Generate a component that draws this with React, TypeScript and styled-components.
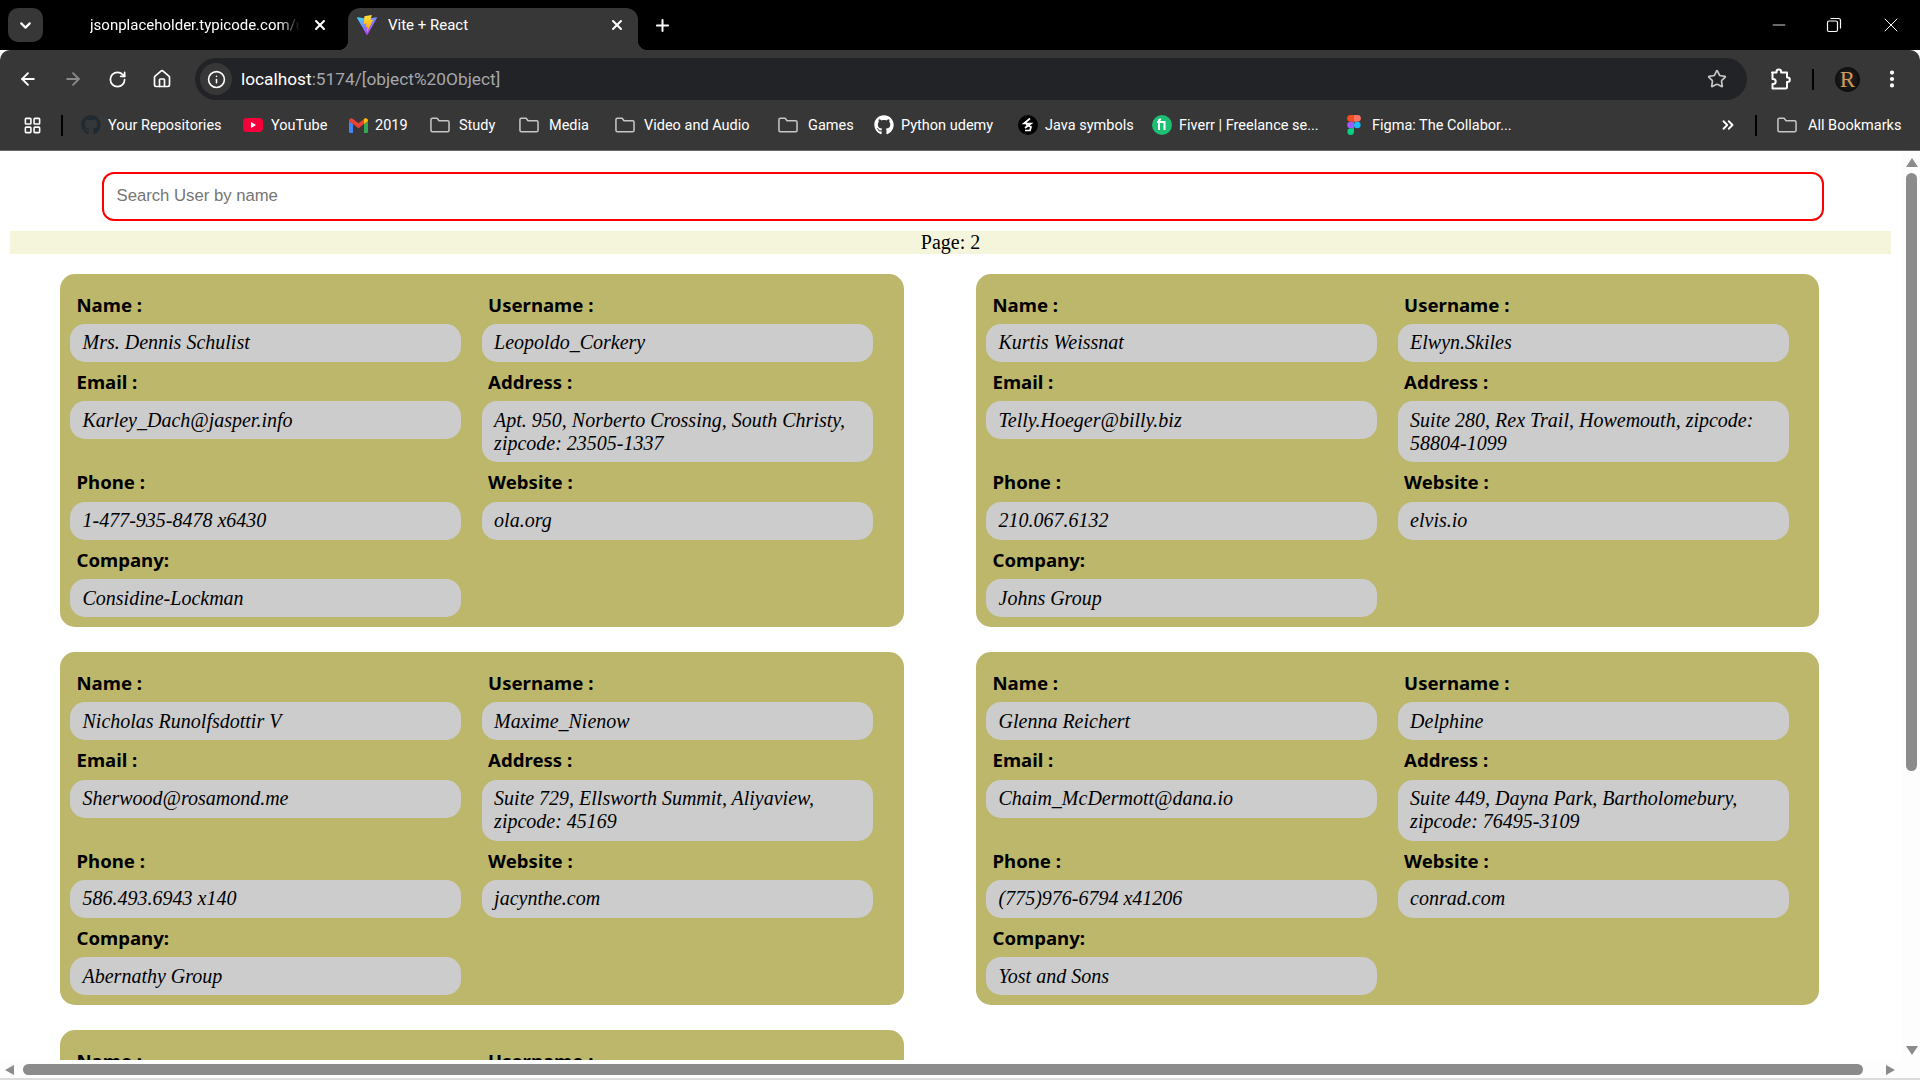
import React from "react";
import styled, { createGlobalStyle } from "styled-components";
import {
  ArrowLeft,
  ArrowRight,
  ChevronDown,
  ChevronsRight,
  Home,
  Info,
  LayoutGrid,
  Minus,
  MoreVertical,
  Plus,
  RotateCw,
  Star,
  X,
} from "lucide-react";
import { FaGithub } from "react-icons/fa";

const GlobalStyle = createGlobalStyle`
  html, body {
    margin: 0;
    padding: 0;
    overflow: hidden;
    background: #fff;
  }
`;

const uiFont = `Roboto, "Noto Sans", sans-serif`;

const Screen = styled.div`
  width: 1920px;
  height: 1080px;
  display: flex;
  flex-direction: column;
  overflow: hidden;
`;

/* browser chrome */
const TabStrip = styled.div`
  height: 50px;
  background: #000;
  display: flex;
  align-items: flex-end;
  padding-left: 8px;
  color: #fff;
  font: 15px ${uiFont};
`;

const TabListButton = styled.div`
  width: 35px;
  height: 34px;
  margin-bottom: 8px;
  border-radius: 10px;
  background: #373737;
  display: flex;
  align-items: center;
  justify-content: center;
`;

const Tab = styled.div<{ $active?: boolean }>`
  position: relative;
  height: 42px;
  display: flex;
  align-items: center;
  box-sizing: border-box;
  width: ${(p) => (p.$active ? "290px" : "305px")};
  padding: ${(p) => (p.$active ? "0 0 8px 9px" : "0 0 8px 47px")};
  border-radius: 12px 12px 0 0;
  background: ${(p) => (p.$active ? "#373737" : "transparent")};
  ${(p) =>
    p.$active &&
    `
    &:before, &:after {
      content: "";
      position: absolute;
      bottom: 0;
      width: 10px;
      height: 10px;
    }
    &:before { left: -10px; background: radial-gradient(circle at 0 0, #000 10px, #373737 10.5px); }
    &:after { right: -10px; background: radial-gradient(circle at 100% 0, #000 10px, #373737 10.5px); }
  `}
`;

const TabTitle = styled.span<{ $width: number; $indent: number; $fade?: boolean }>`
  width: ${(p) => p.$width}px;
  overflow: hidden;
  white-space: nowrap;
  margin-left: ${(p) => p.$indent}px;
  ${(p) => p.$fade && "mask-image: linear-gradient(to right, #000 90%, transparent 100%);"}
`;

const TabClose = styled.span<{ $right: number }>`
  display: flex;
  margin-left: auto;
  margin-right: ${(p) => p.$right}px;
`;

const NewTab = styled.span`
  display: flex;
  margin: 0 0 9px 15px;
  height: 32px;
  align-items: center;
`;

const WindowControls = styled.div`
  margin-left: auto;
  height: 50px;
  display: flex;
  align-items: center;
  gap: 35px;
  padding-right: 17px;
`;

const Toolbar = styled.div`
  height: 50px;
  background: #373737;
  border-radius: 10px 10px 0 0;
  display: flex;
  align-items: flex-end;
  padding-left: 18px;
  color: #fff;
`;

const NavIcons = styled.div`
  height: 42px;
  display: flex;
  align-items: center;
  gap: 25px;
`;

const Omnibox = styled.div`
  width: 1552px;
  height: 42px;
  margin-left: 23px;
  border-radius: 21px;
  background: #222326;
  display: flex;
  align-items: center;
  padding: 0 20px 0 5px;
  box-sizing: border-box;
  font: 17.3px ${uiFont};
`;

const InfoChip = styled.div`
  width: 32px;
  height: 32px;
  border-radius: 50%;
  background: #373737;
  display: flex;
  align-items: center;
  justify-content: center;
`;

const UrlHost = styled.span`
  margin-left: 9px;
  color: #fff;
`;

const UrlRest = styled.span`
  color: #a5a7ab;
`;

const StarSlot = styled.div`
  margin-left: auto;
  display: flex;
`;

const ToolbarEnd = styled.div`
  height: 42px;
  display: flex;
  align-items: center;
  margin-left: 22px;
`;

const Divider = styled.div<{ $left: number; $right: number }>`
  width: 2px;
  height: 21px;
  background: #000;
  margin: 0 ${(p) => p.$right}px 0 ${(p) => p.$left}px;
`;

const Avatar = styled.div`
  width: 25px;
  height: 25px;
  border-radius: 50%;
  background: radial-gradient(circle, #2a2a2a 0%, #0a0a0a 80%);
  color: #d39a5a;
  font: 23px/25px "Liberation Serif", serif;
  text-align: center;
`;

const MenuDots = styled.div`
  display: flex;
  margin-left: 21px;
`;

const BookmarksBar = styled.div`
  height: 51px;
  box-sizing: border-box;
  border-bottom: 1px solid #686868;
  background: #373737;
  display: flex;
  align-items: center;
  padding: 0 0 0 23px;
  color: #fff;
  font: 14.5px ${uiFont};
`;

const Bookmark = styled.div<{ $gap: number; $width: number; $left: number }>`
  display: flex;
  align-items: center;
  margin-left: ${(p) => p.$left}px;
  white-space: nowrap;
  span {
    width: ${(p) => p.$width}px;
    margin-left: ${(p) => p.$gap}px;
  }
`;

const BookmarkGlyph = styled.div`
  width: 20px;
  height: 20px;
  display: flex;
  align-items: center;
  justify-content: center;
`;

const OverflowChevrons = styled.div`
  display: flex;
  margin-left: 204px;
`;

/* page */
const Viewport = styled.div`
  flex: 1;
  display: flex;
  min-height: 0;
`;

const Content = styled.main`
  width: 1901px;
  overflow: hidden;
  padding-top: 21px;
  box-sizing: border-box;
`;

const SearchInput = styled.input`
  display: block;
  width: 1722px;
  height: 49px;
  margin-left: 102px;
  box-sizing: border-box;
  border: 2px solid #f00;
  border-radius: 12px;
  outline: none;
  padding: 0 12.5px 2px;
  font: 16.7px "Liberation Sans", Arial, sans-serif;
  &::placeholder {
    color: #757575;
  }
`;

const PageBar = styled.div`
  width: 1881px;
  height: 23px;
  margin: 10px 0 0 10px;
  background: #f5f5dc;
  color: #000;
  text-align: center;
  font: 20px/23px "Liberation Serif", serif;
`;

const CardGrid = styled.div`
  display: grid;
  grid-template-columns: 844px 843px;
  column-gap: 72px;
  row-gap: 25px;
  margin: 20px 0 0 60px;
`;

const Card = styled.section`
  background: #bdb76b;
  border-radius: 15px;
  padding: 10.6px 31px 10px 10px;
  display: grid;
  grid-template-columns: 391px 391px;
  column-gap: 20.6px;
  align-items: start;
`;

const Label = styled.div`
  height: 39.4px;
  box-sizing: border-box;
  padding: 8px 0 0 6.5px;
  font: 700 18.6px/24px "Noto Sans", "Open Sans", sans-serif;
  color: #000;
`;

const Value = styled.div`
  background: #ccc;
  border-radius: 15px;
  padding: 7.5px 12.5px;
  font: italic 20px/23px "Liberation Serif", serif;
  color: #000;
`;

/* scrollbars */
const VScroll = styled.div`
  width: 19px;
  background: #fdfdfd;
  display: flex;
  flex-direction: column;
  align-items: center;
  padding-left: 2px;
  box-sizing: border-box;
`;

const ArrowUp = styled.div`
  width: 0;
  height: 0;
  margin-top: 7px;
  border-left: 6.5px solid transparent;
  border-right: 6.5px solid transparent;
  border-bottom: 9px solid #8b8b8b;
`;

const VThumb = styled.div`
  width: 11px;
  height: 598px;
  margin-top: 6px;
  border-radius: 6px;
  background: #8b8b8b;
`;

const ArrowDown = styled.div`
  width: 0;
  height: 0;
  margin-top: auto;
  margin-bottom: 5px;
  border-left: 6.5px solid transparent;
  border-right: 6.5px solid transparent;
  border-top: 9px solid #8b8b8b;
`;

const HScroll = styled.div`
  height: 20px;
  box-sizing: border-box;
  background: #fdfdfd;
  border-bottom: 2px solid #dcdcdc;
  display: flex;
  align-items: flex-start;
  padding: 4px 0 0 5px;
`;

const ArrowLeftHead = styled.div`
  width: 0;
  height: 0;
  margin-top: 1px;
  border-top: 5.5px solid transparent;
  border-bottom: 5.5px solid transparent;
  border-right: 9px solid #8b8b8b;
`;

const HThumb = styled.div`
  width: 1840px;
  height: 11px;
  margin-left: 9px;
  border-radius: 6px;
  background: #8b8b8b;
`;

const ArrowRightHead = styled.div`
  width: 0;
  height: 0;
  margin: 1px 0 0 23px;
  border-top: 5.5px solid transparent;
  border-bottom: 5.5px solid transparent;
  border-left: 9px solid #8b8b8b;
`;

/* logos */
const ViteLogo = () => (
  <svg width="20" height="22" viewBox="0 0 256 257">
    <defs>
      <linearGradient id="viteA" x1="0%" x2="60%" y1="10%" y2="100%">
        <stop offset="0%" stopColor="#41D1FF" />
        <stop offset="100%" stopColor="#BD34FE" />
      </linearGradient>
      <linearGradient id="viteB" x1="40%" x2="50%" y1="0%" y2="90%">
        <stop offset="0%" stopColor="#FFEA83" />
        <stop offset="8%" stopColor="#FFDD35" />
        <stop offset="100%" stopColor="#FFA800" />
      </linearGradient>
    </defs>
    <path
      fill="url(#viteA)"
      d="M255.153 37.938 134.897 252.976c-2.483 4.44-8.862 4.466-11.382.048L.875 37.958c-2.746-4.814 1.371-10.646 6.827-9.67l120.385 21.517a6.537 6.537 0 0 0 2.322-.004l117.867-21.483c5.438-.991 9.574 4.796 6.877 9.62Z"
    />
    <path
      fill="url(#viteB)"
      d="M185.432.063 96.44 17.501a3.268 3.268 0 0 0-2.634 3.014l-5.474 92.456a3.268 3.268 0 0 0 3.997 3.378l24.777-5.718c2.318-.535 4.413 1.507 3.936 3.838l-7.361 36.047c-.495 2.426 1.782 4.5 4.151 3.78l15.304-4.649c2.372-.72 4.652 1.36 4.15 3.788l-11.698 56.621c-.732 3.542 3.979 5.473 5.943 2.437l1.313-2.028 72.516-144.72c1.215-2.423-.88-5.186-3.54-4.672l-25.505 4.922c-2.396.462-4.435-1.77-3.759-4.114l16.646-57.705c.677-2.35-1.37-4.583-3.769-4.113Z"
    />
  </svg>
);

const ExtensionIcon = () => (
  <svg width="22" height="22" viewBox="0 0 22 22" fill="none" stroke="#fff" strokeWidth="2" strokeLinejoin="round">
    <path d="M3 4.500h4.500V3.800a2.300 2.300 0 0 1 4.600 0v.7H18v5h.5a2.300 2.300 0 0 1 0 4.600H18V19a1.500 1.500 0 0 1-1.500 1.500H3.500v-4.500h.7a2.500 2.500 0 0 0 0-5h-.7V4.500z" />
  </svg>
);

const FolderIcon = () => (
  <svg width="21" height="16" viewBox="0 0 21 16" fill="none" stroke="#c7c7c7" strokeWidth="1.6" strokeLinejoin="round">
    <path d="M1 2.500A1.500 1.500 0 0 1 2.500 1h5l2 2.500h9A1.500 1.500 0 0 1 20 5v8.500a1.500 1.500 0 0 1-1.500 1.500h-16A1.500 1.500 0 0 1 1 13.500z" />
  </svg>
);

const YoutubeLogo = () => (
  <svg width="20" height="14" viewBox="0 0 20 14">
    <rect width="20" height="14" rx="4" fill="#f6003c" />
    <path d="M8 4l5 3-5 3z" fill="#fff" />
  </svg>
);

const GmailLogo = () => (
  <svg width="19" height="15" viewBox="0 0 19 15">
    <path d="M0 3v10.500A1.500 1.500 0 0 0 1.500 15H4V6z" fill="#4285f4" />
    <path d="M15 6v9h2.500a1.500 1.500 0 0 0 1.500-1.500V3z" fill="#34a853" />
    <path d="M0 3c0-2.500 2.500-3.500 4-2l5.500 4.200L15 1c1.500-1.500 4-.5 4 2l-4 3-5.500 4.200L4 6z" fill="#ea4335" />
    <path d="M15 1c1.500-1.500 4-.5 4 2l-4 3z" fill="#fbbc04" />
  </svg>
);

const JavaLogo = () => (
  <svg width="20" height="20" viewBox="0 0 20 20">
    <circle cx="10" cy="10" r="10" fill="#000" />
    <path d="M12 3.500 6 8.500h7l-6 4.500M8 9.500l5 2.500-1 3.500H7" fill="none" stroke="#fff" strokeWidth="1.700" />
  </svg>
);

const FiverrLogo = () => (
  <svg width="20" height="20" viewBox="0 0 20 20">
    <circle cx="10" cy="10" r="10" fill="#1dbf73" />
    <path d="M6 15V8H5V6h1V5.500C6 4 7 3.500 9 3.500V5.500C8.300 5.500 8 5.600 8 6h5.500v9h-2V8H8v7z" fill="#fff" />
  </svg>
);

const FigmaLogo = () => (
  <svg width="14" height="20" viewBox="0 0 14 20">
    <path d="M3.500 0H7v6.700H3.500a3.350 3.350 0 0 1 0-6.700z" fill="#f24e1e" />
    <path d="M7 0h3.500a3.350 3.350 0 0 1 0 6.700H7z" fill="#ff7262" />
    <path d="M3.500 6.700H7v6.600H3.500a3.300 3.300 0 0 1 0-6.600z" fill="#a259ff" />
    <circle cx="10.300" cy="10" r="3.300" fill="#1abcfe" />
    <path d="M3.500 13.300H7v3.400a3.300 3.300 0 1 1-3.500-3.400z" fill="#0acf83" />
  </svg>
);

type Person = {
  name: string;
  username: string;
  email: string;
  address: string;
  phone: string;
  website: string;
  company: string;
};

const users: Person[] = [
  {
    name: "Mrs. Dennis Schulist",
    username: "Leopoldo_Corkery",
    email: "Karley_Dach@jasper.info",
    address: "Apt. 950, Norberto Crossing, South Christy, zipcode: 23505-1337",
    phone: "1-477-935-8478 x6430",
    website: "ola.org",
    company: "Considine-Lockman",
  },
  {
    name: "Kurtis Weissnat",
    username: "Elwyn.Skiles",
    email: "Telly.Hoeger@billy.biz",
    address: "Suite 280, Rex Trail, Howemouth, zipcode: 58804-1099",
    phone: "210.067.6132",
    website: "elvis.io",
    company: "Johns Group",
  },
  {
    name: "Nicholas Runolfsdottir V",
    username: "Maxime_Nienow",
    email: "Sherwood@rosamond.me",
    address: "Suite 729, Ellsworth Summit, Aliyaview, zipcode: 45169",
    phone: "586.493.6943 x140",
    website: "jacynthe.com",
    company: "Abernathy Group",
  },
  {
    name: "Glenna Reichert",
    username: "Delphine",
    email: "Chaim_McDermott@dana.io",
    address: "Suite 449, Dayna Park, Bartholomebury, zipcode: 76495-3109",
    phone: "(775)976-6794 x41206",
    website: "conrad.com",
    company: "Yost and Sons",
  },
  {
    name: "Clementina DuBuque",
    username: "Moriah.Stanton",
    email: "Rey.Padberg@karina.biz",
    address: "Suite 198, Kattie Turnpike, Lebsackbury, zipcode: 31428-2261",
    phone: "024-648-3804",
    website: "ambrose.net",
    company: "Hoeger LLC",
  },
];

const UserCard = ({ user }: { user: Person }) => (
  <Card>
    <div>
      <Label>Name :</Label>
      <Value>{user.name}</Value>
    </div>
    <div>
      <Label>Username :</Label>
      <Value>{user.username}</Value>
    </div>
    <div>
      <Label>Email :</Label>
      <Value>{user.email}</Value>
    </div>
    <div>
      <Label>Address :</Label>
      <Value>{user.address}</Value>
    </div>
    <div>
      <Label>Phone :</Label>
      <Value>{user.phone}</Value>
    </div>
    <div>
      <Label>Website :</Label>
      <Value>{user.website}</Value>
    </div>
    <div>
      <Label>Company:</Label>
      <Value>{user.company}</Value>
    </div>
  </Card>
);

export default function App() {
  return (
    <Screen>
      <GlobalStyle />
      <TabStrip>
        <TabListButton>
          <ChevronDown size={17} strokeWidth={3} />
        </TabListButton>
        <Tab>
          <TabTitle $width={210} $indent={0} $fade>
            jsonplaceholder.typicode.com/users
          </TabTitle>
          <TabClose $right={20}>
            <X size={16} strokeWidth={3} />
          </TabClose>
        </Tab>
        <Tab $active>
          <ViteLogo />
          <TabTitle $width={120} $indent={11}>
            Vite + React
          </TabTitle>
          <TabClose $right={13}>
            <X size={16} strokeWidth={3} />
          </TabClose>
        </Tab>
        <NewTab>
          <Plus size={19} strokeWidth={2.5} />
        </NewTab>
        <WindowControls>
          <Minus size={20} strokeWidth={1} />
          <svg width="20" height="20" viewBox="0 0 20 20" fill="none" stroke="#fff" strokeWidth="1.2">
            <rect x="3.500" y="6" width="10" height="10.500" rx="1.500" />
            <path d="M6.500 3.500h8a2 2 0 0 1 2 2v8" />
          </svg>
          <X size={24} strokeWidth={1} />
        </WindowControls>
      </TabStrip>
      <Toolbar>
        <NavIcons>
          <ArrowLeft size={20} strokeWidth={2.2} />
          <ArrowRight size={20} strokeWidth={2.2} color="#8a8a8a" />
          <RotateCw size={19} strokeWidth={2.2} />
          <Home size={20} strokeWidth={2} />
        </NavIcons>
        <Omnibox>
          <InfoChip>
            <Info size={19} strokeWidth={2} />
          </InfoChip>
          <UrlHost>localhost</UrlHost>
          <UrlRest>:5174/[object%20Object]</UrlRest>
          <StarSlot>
            <Star size={20} strokeWidth={2} color="#c7c7c7" />
          </StarSlot>
        </Omnibox>
        <ToolbarEnd>
          <ExtensionIcon />
          <Divider $left={21} $right={21} />
          <Avatar>R</Avatar>
          <MenuDots>
            <MoreVertical size={22} strokeWidth={2.6} />
          </MenuDots>
        </ToolbarEnd>
      </Toolbar>
      <BookmarksBar>
        <LayoutGrid size={19} strokeWidth={2} />
        <Divider $left={19} $right={0} />
        <Bookmark $left={18} $gap={7} $width={115}>
          <BookmarkGlyph>
            <FaGithub size={20} color="#1f2a33" />
          </BookmarkGlyph>
          <span>Your Repositories</span>
        </Bookmark>
        <Bookmark $left={20} $gap={8} $width={57}>
          <BookmarkGlyph>
            <YoutubeLogo />
          </BookmarkGlyph>
          <span>YouTube</span>
        </Bookmark>
        <Bookmark $left={20} $gap={7} $width={33}>
          <BookmarkGlyph>
            <GmailLogo />
          </BookmarkGlyph>
          <span>2019</span>
        </Bookmark>
        <Bookmark $left={22} $gap={9} $width={37}>
          <BookmarkGlyph>
            <FolderIcon />
          </BookmarkGlyph>
          <span>Study</span>
        </Bookmark>
        <Bookmark $left={23} $gap={10} $width={41}>
          <BookmarkGlyph>
            <FolderIcon />
          </BookmarkGlyph>
          <span>Media</span>
        </Bookmark>
        <Bookmark $left={25} $gap={9} $width={111}>
          <BookmarkGlyph>
            <FolderIcon />
          </BookmarkGlyph>
          <span>Video and Audio</span>
        </Bookmark>
        <Bookmark $left={23} $gap={10} $width={44}>
          <BookmarkGlyph>
            <FolderIcon />
          </BookmarkGlyph>
          <span>Games</span>
        </Bookmark>
        <Bookmark $left={22} $gap={7} $width={96}>
          <BookmarkGlyph>
            <FaGithub size={20} color="#fff" />
          </BookmarkGlyph>
          <span>Python udemy</span>
        </Bookmark>
        <Bookmark $left={21} $gap={7} $width={87}>
          <BookmarkGlyph>
            <JavaLogo />
          </BookmarkGlyph>
          <span>Java symbols</span>
        </Bookmark>
        <Bookmark $left={20} $gap={7} $width={140}>
          <BookmarkGlyph>
            <FiverrLogo />
          </BookmarkGlyph>
          <span>Fiverr | Freelance se...</span>
        </Bookmark>
        <Bookmark $left={25} $gap={8} $width={143}>
          <BookmarkGlyph>
            <FigmaLogo />
          </BookmarkGlyph>
          <span>Figma: The Collabor...</span>
        </Bookmark>
        <OverflowChevrons>
          <ChevronsRight size={18} strokeWidth={2.4} />
        </OverflowChevrons>
        <Divider $left={18} $right={20} />
        <Bookmark $left={0} $gap={11} $width={94}>
          <BookmarkGlyph>
            <FolderIcon />
          </BookmarkGlyph>
          <span>All Bookmarks</span>
        </Bookmark>
      </BookmarksBar>
      <Viewport>
        <Content>
          <SearchInput placeholder="Search User by name" />
          <PageBar>Page: 2</PageBar>
          <CardGrid>
            {users.map((user) => (
              <UserCard key={user.username} user={user} />
            ))}
          </CardGrid>
        </Content>
        <VScroll>
          <ArrowUp />
          <VThumb />
          <ArrowDown />
        </VScroll>
      </Viewport>
      <HScroll>
        <ArrowLeftHead />
        <HThumb />
        <ArrowRightHead />
      </HScroll>
    </Screen>
  );
}
